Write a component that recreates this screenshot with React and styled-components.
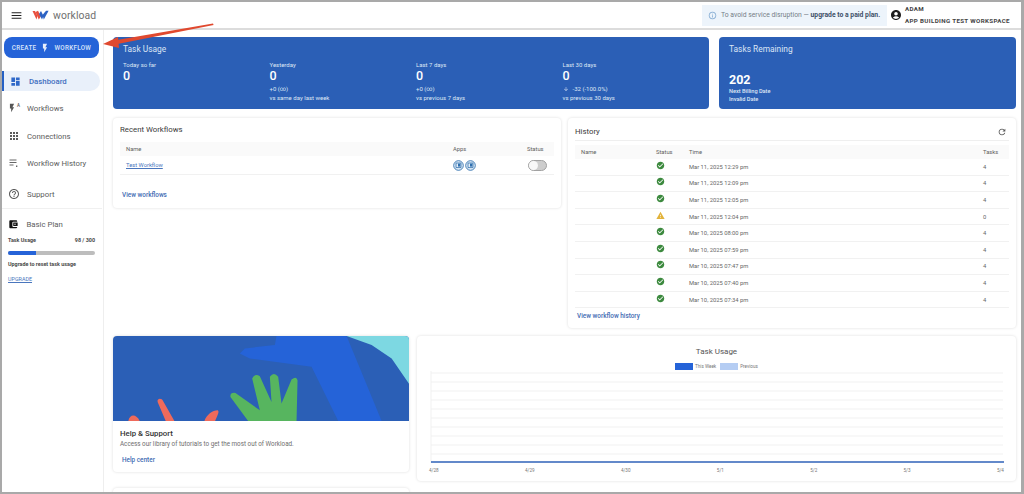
import React from 'react';
import styled, { createGlobalStyle } from 'styled-components';
import {
  MdMenu, MdDashboard, MdFlashOn, MdApps, MdHelpOutline, MdAccountBalanceWallet,
  MdInfoOutline, MdAccountCircle, MdCheckCircle, MdWarning, MdRefresh, MdArrowDownward,
} from 'react-icons/md';

const GlobalStyle = createGlobalStyle`
  html, body { margin: 0; padding: 0; background: #fff; }
  * { box-sizing: border-box; }
  body { font-family: Roboto, "Liberation Sans", sans-serif; color: #333; }
`;

const Frame = styled.div`
  position: relative;
  width: 1024px;
  height: 494px;
  overflow: hidden;
  background: #fff;
  border-style: solid;
  border-color: #a9a9a9;
  border-width: 2px 3px 2px 2px;
  display: flex;
  flex-direction: column;
`;

const Header = styled.header`
  height: 28px;
  flex: none;
  display: flex;
  align-items: center;
  padding-left: 8px;
  border-bottom: 2px solid #dcdcdc;
`;
const MenuButton = styled.div`
  display: flex;
  font-size: 13px;
  color: #222;
  margin-right: 9px;
`;
const LogoText = styled.span`
  font-size: 10.4px;
  letter-spacing: 0.1px;
  color: #707070;
  margin-left: 4px;
`;
const Banner = styled.div`
  margin-left: auto;
  width: 185px;
  height: 21px;
  display: flex;
  align-items: center;
  gap: 4px;
  padding-left: 6px;
  background: #edf4fb;
  font-size: 6.8px;
  color: #757e87;
  white-space: nowrap;
  svg { color: #7da7d0; font-size: 9px; }
  b { color: #3d5068; font-weight: 700; }
`;
const Account = styled.div`
  display: flex;
  align-items: center;
  gap: 3px;
  width: 134px;
  padding-left: 3px;
  svg { font-size: 12px; color: #1c1c1c; }
`;
const AccountText = styled.div`
  display: flex;
  flex-direction: column;
  gap: 4px;
  font-size: 6.2px;
  font-weight: 700;
  letter-spacing: 0.35px;
  color: #444;
  white-space: nowrap;
`;

const Body = styled.div`
  flex: 1;
  min-height: 0;
  display: flex;
`;

const Sidebar = styled.aside`
  width: 102px;
  flex: none;
  border-right: 1px solid #eeeeee;
  padding-top: 7px;
  display: flex;
  flex-direction: column;
`;
const CreateButton = styled.div`
  margin-left: 2px;
  width: 95px;
  height: 21px;
  border-radius: 8px;
  background: #2563d8;
  color: #d9e5fa;
  font-size: 6.3px;
  font-weight: 500;
  letter-spacing: 0.3px;
  display: flex;
  align-items: center;
  justify-content: center;
  gap: 4px;
  svg { font-size: 10px; color: #e8effb; }
`;
const NavList = styled.nav`
  margin-top: 13px;
  display: flex;
  flex-direction: column;
`;
const NavItem = styled.div`
  height: 20px;
  margin-bottom: ${(p) => p.$gap}px;
  display: flex;
  align-items: center;
  gap: ${(p) => (p.$active ? 8 : 7)}px;
  width: 98px;
  padding-left: 6px;
  font-size: 7.8px;
  font-weight: ${(p) => (p.$active ? 500 : 400)};
  color: ${(p) => (p.$active ? '#3f6fc0' : '#5c5c5c')};
  background: ${(p) => (p.$active ? '#e9f0fa' : 'transparent')};
  border-left: ${(p) => (p.$active ? '2px solid #2560c4' : 'none')};
  border-radius: ${(p) => (p.$active ? '0 10px 10px 0' : 0)};
  svg { font-size: ${(p) => (p.$active ? 11 : 12)}px; flex: none; }
`;
const WorkflowIcon = styled.span`
  display: flex;
  align-items: flex-start;
  width: 12px;
  color: #555;
  font-size: 4.5px;
  font-weight: 500;
  svg { font-size: 10px; margin-left: -1px; }
`;
const PlanDivider = styled.div`
  height: 1px;
  width: 100px;
  background: #f0f0f0;
  margin-top: 2px;
`;
const PlanBlock = styled.div`
  padding: 8px 8px 0 6px;
`;
const PlanTitle = styled.div`
  display: flex;
  align-items: center;
  gap: 8px;
  height: 14px;
  font-size: 7.8px;
  color: #5c5c5c;
  svg { font-size: 10.5px; color: #111; }
`;
const PlanRow = styled.div`
  display: flex;
  justify-content: space-between;
  font-size: 5.4px;
  font-weight: 700;
  color: #4a4a4a;
  margin-top: 6px;
`;
const PlanBar = styled.div`
  height: 4px;
  border-radius: 2px;
  margin-top: 8px;
  background: #bdbdbd;
  overflow: hidden;
`;
const PlanFill = styled.div`
  height: 100%;
  background: #2563d8;
`;
const PlanHint = styled.div`
  font-size: 5.4px;
  font-weight: 700;
  color: #4a4a4a;
  margin-top: 6px;
`;
const UpgradeLink = styled.a`
  display: block;
  font-size: 5.4px;
  color: #4a76bd;
  text-decoration: underline;
  margin-top: 9px;
`;

const Main = styled.main`
  flex: 1;
  min-width: 0;
  padding: 7px 5px 0 9px;
  display: flex;
  flex-direction: column;
  gap: 8px;
  overflow: hidden;
`;
const TopRow = styled.section`
  display: grid;
  grid-template-columns: 596px 297px;
  gap: 10px;
  margin-bottom: 1px;
`;
const MiddleRow = styled.section`
  display: grid;
  grid-template-columns: 448px 448px;
  gap: 7px;
  align-items: start;
`;
const BottomRow = styled.section`
  display: grid;
  grid-template-columns: 296px 599px;
  gap: 8px;
  align-items: start;
`;
const LeftColumn = styled.div`
  display: flex;
  flex-direction: column;
  gap: 16px;
`;

const BlueCard = styled.div`
  height: 72px;
  background: #2b5fb6;
  border-radius: 4px;
  color: #e6edf8;
  padding: 7px 10px;
`;
const BlueTitle = styled.div`
  font-size: 8.4px;
  line-height: 11px;
  color: #dbe5f5;
`;
const StatGrid = styled.div`
  display: grid;
  grid-template-columns: repeat(4, 146.5px);
  margin-top: 5px;
`;
const Stat = styled.div`
  display: flex;
  flex-direction: column;
  font-size: 6px;
  line-height: 9px;
  color: #dfe7f5;
`;
const StatValue = styled.div`
  font-size: 12.5px;
  line-height: 14px;
  font-weight: 500;
  color: #fff;
  margin-bottom: 1px;
`;
const StatDelta = styled.div`
  display: flex;
  align-items: center;
  gap: 2px;
  svg { font-size: 6px; margin-right: 2px; }
`;
const RemainingValue = styled.div`
  font-size: 12.5px;
  line-height: 14px;
  font-weight: 700;
  color: #fff;
  margin-top: 18px;
`;
const RemainingNote = styled.div`
  font-size: 5.6px;
  line-height: 8px;
  color: #dfe7f5;
  font-weight: 500;
`;

const Card = styled.div`
  background: #fff;
  border-radius: 4px;
  box-shadow: 0 0 3px rgba(0, 0, 0, 0.14);
`;
const RecentCard = styled(Card)`
  height: 90px;
  padding: 6px 7px;
`;
const CardTitle = styled.div`
  font-size: 7.8px;
  line-height: 11px;
  color: #3a3a3a;
`;
const TableHead = styled.div`
  display: grid;
  grid-template-columns: ${(p) => p.$cols};
  align-items: center;
  height: 14px;
  margin-top: ${(p) => p.$top || 0}px;
  background: #fafafa;
  font-size: 5.8px;
  color: #5f5f5f;
  padding-left: 6px;
`;
const TableRow = styled.div`
  display: grid;
  grid-template-columns: ${(p) => p.$cols};
  align-items: center;
  height: ${(p) => p.$height}px;
  border-bottom: 1px solid #f1f1f1;
  font-size: 5.8px;
  color: #666;
  padding-left: 6px;
`;
const WorkflowLink = styled.a`
  color: #4a76bd;
  text-decoration: underline;
`;
const AppIcons = styled.div`
  display: flex;
  gap: 1px;
`;
const Toggle = styled.div`
  position: relative;
  width: 19px;
  height: 11px;
  margin-left: 1px;
  border-radius: 6px;
  background: #cdcdcd;
  border: 1px solid #a2a2a2;
  &:after {
    content: '';
    position: absolute;
    left: 0;
    top: 0;
    width: 9px;
    height: 9px;
    border-radius: 50%;
    background: #f8f8f8;
  }
`;
const ViewLink = styled.div`
  font-size: 6.4px;
  font-weight: 500;
  color: #3f6bb3;
  margin: ${(p) => p.$margin};
`;

const HistoryCard = styled(Card)`
  height: 210px;
  padding: 7px 7px 0;
`;
const HistoryTop = styled.div`
  display: flex;
  align-items: center;
  justify-content: space-between;
  height: 13px;
  margin-bottom: 2px;
  padding-right: 2px;
  svg { font-size: 10px; color: #555; }
`;
const HistoryDivider = styled.div`
  height: 1px;
  background: #efefef;
  margin-bottom: 4px;
`;
const StatusCell = styled.div`
  display: flex;
  font-size: 9px;
  margin-top: -3px;
  color: ${(p) => (p.$warn ? '#e2b33c' : '#3d8a3f')};
`;

const HelpCard = styled(Card)`
  height: 136px;
  overflow: hidden;
`;
const HelpArt = styled.svg`
  display: block;
  width: 296px;
  height: 85px;
`;
const HelpBody = styled.div`
  padding: 8px 7px;
`;
const HelpTitle = styled.div`
  font-size: 7.8px;
  line-height: 10px;
  font-weight: 500;
  color: #333;
`;
const HelpText = styled.div`
  font-size: 6.3px;
  line-height: 11px;
  color: #6e6e6e;
`;
const PeekCard = styled(Card)`
  height: 20px;
`;

const ChartCard = styled(Card)`
  height: 145px;
  padding: 11px 12px 0;
`;
const ChartTitle = styled.div`
  font-size: 8px;
  line-height: 10px;
  text-align: center;
  color: #555;
`;
const Legend = styled.div`
  display: flex;
  justify-content: center;
  align-items: center;
  gap: 4px;
  margin-top: 6px;
  height: 7px;
  font-size: 4.6px;
  color: #777;
`;
const LegendSwatch = styled.span`
  width: 18px;
  height: 7px;
  background: ${(p) => p.$color};
  margin-right: -2px;
`;
const ChartLines = styled.svg`
  display: block;
  width: 575px;
  height: 92px;
  margin-top: 1px;
`;
const AxisLabels = styled.div`
  display: flex;
  justify-content: space-between;
  font-size: 4.6px;
  line-height: 6px;
  color: #777;
  margin-top: 5px;
`;

const ArrowOverlay = styled.svg`
  position: absolute;
  left: 98px;
  top: 18px;
  width: 120px;
  height: 30px;
`;

const RECENT_COLS = '327px 74px 1fr';
const HISTORY_COLS = '75px 33px 1fr 26px';

const historyRows = [
  { time: 'Mar 11, 2025 12:29 pm', tasks: 4 },
  { time: 'Mar 11, 2025 12:09 pm', tasks: 4 },
  { time: 'Mar 11, 2025 12:05 pm', tasks: 4 },
  { time: 'Mar 11, 2025 12:04 pm', tasks: 0, warn: true },
  { time: 'Mar 10, 2025 08:00 pm', tasks: 4 },
  { time: 'Mar 10, 2025 07:59 pm', tasks: 4 },
  { time: 'Mar 10, 2025 07:47 pm', tasks: 4 },
  { time: 'Mar 10, 2025 07:40 pm', tasks: 4 },
  { time: 'Mar 10, 2025 07:34 pm', tasks: 4 },
];

const stats = [
  { label: 'Today so far' },
  { label: 'Yesterday', delta: '+0 (∞)', note: 'vs same day last week' },
  { label: 'Last 7 days', delta: '+0 (∞)', note: 'vs previous 7 days' },
  { label: 'Last 30 days', delta: '-32 (-100.0%)', note: 'vs previous 30 days', down: true },
];

const axisDays = ['4/28', '4/29', '4/30', '5/1', '5/2', '5/3', '5/4'];

const Logo = () => (
  <svg width="17" height="10" viewBox="0 0 17 10">
    <path d="M0.5 1 L3 1 L5.5 6 L4.5 9.5 Z" fill="#e8503f" />
    <path d="M3.5 2 L6 0.8 L8.8 6.5 L6.8 9.5 Z" fill="#e8503f" />
    <path d="M7 4 L9 1 L11.5 6 L10 9.5 Z" fill="#2c62c4" />
    <path d="M10.5 5 L14 0.8 L16.6 0.8 L11.8 9.5 Z" fill="#2c62c4" />
  </svg>
);

const HistoryListIcon = () => (
  <svg width="12" height="12" viewBox="0 0 12 12" fill="none" stroke="#555" strokeWidth="0.9">
    <path d="M1.5 3h7M1.5 5.5h7M1.5 8h4" />
    <path d="M8.7 8.5v1.4" strokeWidth="1.2" />
  </svg>
);

const AppBadge = () => (
  <svg width="11" height="11" viewBox="0 0 11 11" fill="#e3eef8" stroke="#2f6fae">
    <circle cx="5.5" cy="5.5" r="4.8" strokeWidth="0.9" />
    <path d="M3 3h5v4.6H3z" fill="none" strokeWidth="0.8" />
    <path d="M5 3.6h2.4v3H5z" fill="#2f6fae" stroke="none" />
  </svg>
);

const HelpIllustration = () => (
  <HelpArt viewBox="0 0 887 254" preserveAspectRatio="none">
    <rect width="887" height="254" fill="#2b5fb6" />
    <path d="M490 0 L700 0 L805 254 L675 254 L595 92 L410 67 L380 52 L395 37 L485 27 Z" fill="#2563d8" />
    <path d="M700 0 L887 0 L887 143 L835 67 L775 27 Z" fill="#7dd8e2" />
    <path d="M405 254 L352 182 Q350 168 367 170 L440 222 L417 127 Q425 110 440 120 L475 197 L470 122 Q482 105 495 122 L505 202 L535 130 Q550 118 553 132 L550 254 Z" fill="#57b55f" />
    <path d="M134 198 C130 186 146 184 150 194 L184 254 L158 254 Z" fill="#ef6a5b" />
    <path d="M46 254 C50 232 70 232 80 254 Z" fill="#ef6a5b" />
    <path d="M274 254 C280 236 298 222 314 222 C320 226 312 240 306 254 Z" fill="#ef6a5b" />
  </HelpArt>
);

const App = () => {
  return (
    <Frame>
      <GlobalStyle />
      <Header>
        <MenuButton><MdMenu /></MenuButton>
        <Logo />
        <LogoText>workload</LogoText>
        <Banner>
          <MdInfoOutline />
          <span>To avoid service disruption — <b>upgrade to a paid plan.</b></span>
        </Banner>
        <Account>
          <MdAccountCircle />
          <AccountText>
            <span>ADAM</span>
            <span>APP BUILDING TEST WORKSPACE</span>
          </AccountText>
        </Account>
      </Header>
      <Body>
        <Sidebar>
          <CreateButton>CREATE <MdFlashOn /> WORKFLOW</CreateButton>
          <NavList>
            <NavItem $active $gap={7}><MdDashboard color="#2f68c8" />Dashboard</NavItem>
            <NavItem $gap={8}><WorkflowIcon><MdFlashOn />A</WorkflowIcon>Workflows</NavItem>
            <NavItem $gap={7}><MdApps />Connections</NavItem>
            <NavItem $gap={11}><HistoryListIcon />Workflow History</NavItem>
            <NavItem $gap={2}><MdHelpOutline />Support</NavItem>
          </NavList>
          <PlanDivider />
          <PlanBlock>
            <PlanTitle><MdAccountBalanceWallet />Basic Plan</PlanTitle>
            <PlanRow><span>Task Usage</span><span>98 / 300</span></PlanRow>
            <PlanBar><PlanFill style={{ width: `${(98 / 300) * 100}%` }} /></PlanBar>
            <PlanHint>Upgrade to reset task usage</PlanHint>
            <UpgradeLink>UPGRADE</UpgradeLink>
          </PlanBlock>
        </Sidebar>
        <Main>
          <TopRow>
            <BlueCard>
              <BlueTitle>Task Usage</BlueTitle>
              <StatGrid>
                {stats.map((stat) => (
                  <Stat key={stat.label}>
                    <span>{stat.label}</span>
                    <StatValue>0</StatValue>
                    {stat.delta && (
                      <StatDelta>{stat.down && <MdArrowDownward />}{stat.delta}</StatDelta>
                    )}
                    {stat.note && <span>{stat.note}</span>}
                  </Stat>
                ))}
              </StatGrid>
            </BlueCard>
            <BlueCard>
              <BlueTitle>Tasks Remaining</BlueTitle>
              <RemainingValue>202</RemainingValue>
              <RemainingNote>Next Billing Date</RemainingNote>
              <RemainingNote>Invalid Date</RemainingNote>
            </BlueCard>
          </TopRow>
          <MiddleRow>
            <RecentCard>
              <CardTitle>Recent Workflows</CardTitle>
              <TableHead $cols={RECENT_COLS} $top={7}>
                <span>Name</span><span>Apps</span><span>Status</span>
              </TableHead>
              <TableRow $cols={RECENT_COLS} $height={19}>
                <WorkflowLink>Test Workflow</WorkflowLink>
                <AppIcons><AppBadge /><AppBadge /></AppIcons>
                <Toggle />
              </TableRow>
              <ViewLink $margin="16px 0 0 2px">View workflows</ViewLink>
            </RecentCard>
            <HistoryCard>
              <HistoryTop>
                <CardTitle>History</CardTitle>
                <MdRefresh />
              </HistoryTop>
              <HistoryDivider />
              <TableHead $cols={HISTORY_COLS}>
                <span>Name</span><span>Status</span><span>Time</span><span>Tasks</span>
              </TableHead>
              {historyRows.map((row) => (
                <TableRow key={row.time} $cols={HISTORY_COLS} $height={16.6}>
                  <span />
                  <StatusCell $warn={row.warn}>
                    {row.warn ? <MdWarning /> : <MdCheckCircle />}
                  </StatusCell>
                  <span>{row.time}</span>
                  <span>{row.tasks}</span>
                </TableRow>
              ))}
              <ViewLink $margin="4px 0 0 2px">View workflow history</ViewLink>
            </HistoryCard>
          </MiddleRow>
          <BottomRow>
            <LeftColumn>
              <HelpCard>
                <HelpIllustration />
                <HelpBody>
                  <HelpTitle>Help &amp; Support</HelpTitle>
                  <HelpText>Access our library of tutorials to get the most out of Workload.</HelpText>
                  <ViewLink $margin="6px 0 0 2px">Help center</ViewLink>
                </HelpBody>
              </HelpCard>
              <PeekCard />
            </LeftColumn>
            <ChartCard>
              <ChartTitle>Task Usage</ChartTitle>
              <Legend>
                <LegendSwatch $color="#2563d8" /> <span>This Week</span>
                <LegendSwatch $color="#b5cdf3" /> <span>Previous</span>
              </Legend>
              <ChartLines viewBox="0 0 575 92">
                {[...Array(10).keys()].map((i) => (
                  <line key={i} x1="2" x2="574" y1={2 + i * 9} y2={2 + i * 9} stroke="#eeeeee" strokeWidth="0.8" />
                ))}
                <line x1="2" x2="2" y1="0" y2="92" stroke="#eeeeee" strokeWidth="0.8" />
                <line x1="2" x2="575" y1="91" y2="91" stroke="#2f62b8" strokeWidth="1.4" />
              </ChartLines>
              <AxisLabels>
                {axisDays.map((day) => <span key={day}>{day}</span>)}
              </AxisLabels>
            </ChartCard>
          </BottomRow>
        </Main>
      </Body>
      <ArrowOverlay viewBox="0 0 120 30">
        <path d="M113 3.4 L113.6 5 L15 24.5 L14 20.5 Z" fill="#e0492f" />
        <path d="M3 24 L18 17 L19 28 Z" fill="#e0492f" />
      </ArrowOverlay>
    </Frame>
  );
};

export default App;
